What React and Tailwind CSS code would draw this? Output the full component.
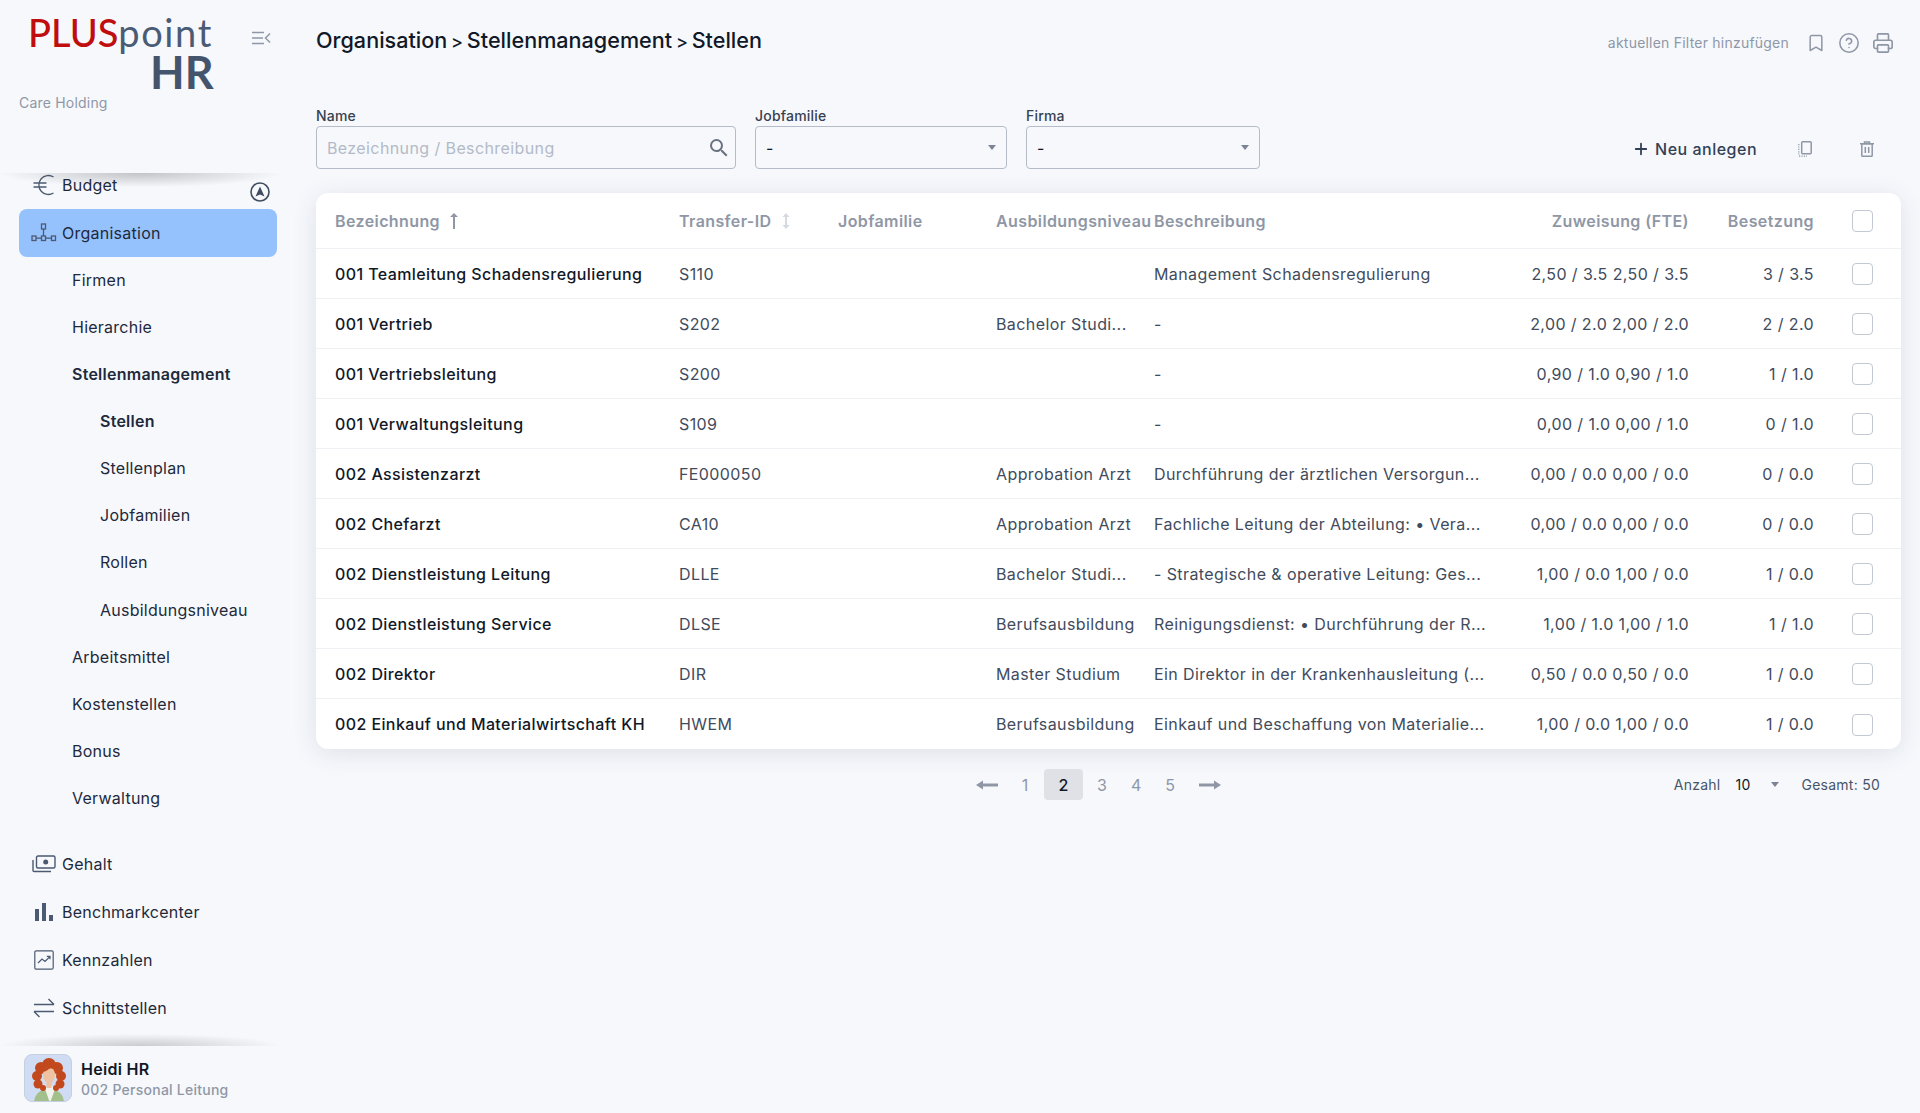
import { Bookmark, CircleHelp, Plus, Printer } from 'lucide-react';

const subNav = [
	{ label: 'Firmen', cls: 'pl-[72px]' },
	{ label: 'Hierarchie', cls: 'pl-[72px]' },
	{ label: 'Stellenmanagement', cls: 'pl-[72px] font-semibold' },
	{ label: 'Stellen', cls: 'pl-[100px] font-semibold' },
	{ label: 'Stellenplan', cls: 'pl-[100px]' },
	{ label: 'Jobfamilien', cls: 'pl-[100px]' },
	{ label: 'Rollen', cls: 'pl-[100px]' },
	{ label: 'Ausbildungsniveau', cls: 'pl-[100px]' },
	{ label: 'Arbeitsmittel', cls: 'pl-[72px]' },
	{ label: 'Kostenstellen', cls: 'pl-[72px]' },
	{ label: 'Bonus', cls: 'pl-[72px]' },
	{ label: 'Verwaltung', cls: 'pl-[72px]' },
];

const rows = [
	['001 Teamleitung Schadensregulierung', 'S110', '', 'Management Schadensregulierung', '2,50 / 3.5 2,50 / 3.5', '3 / 3.5'],
	['001 Vertrieb', 'S202', 'Bachelor Studi...', '-', '2,00 / 2.0 2,00 / 2.0', '2 / 2.0'],
	['001 Vertriebsleitung', 'S200', '', '-', '0,90 / 1.0 0,90 / 1.0', '1 / 1.0'],
	['001 Verwaltungsleitung', 'S109', '', '-', '0,00 / 1.0 0,00 / 1.0', '0 / 1.0'],
	['002 Assistenzarzt', 'FE000050', 'Approbation Arzt', 'Durchführung der ärztlichen Versorgun...', '0,00 / 0.0 0,00 / 0.0', '0 / 0.0'],
	['002 Chefarzt', 'CA10', 'Approbation Arzt', 'Fachliche Leitung der Abteilung: • Vera...', '0,00 / 0.0 0,00 / 0.0', '0 / 0.0'],
	['002 Dienstleistung Leitung', 'DLLE', 'Bachelor Studi...', '- Strategische & operative Leitung: Ges...', '1,00 / 0.0 1,00 / 0.0', '1 / 0.0'],
	['002 Dienstleistung Service', 'DLSE', 'Berufsausbildung', 'Reinigungsdienst: • Durchführung der R...', '1,00 / 1.0 1,00 / 1.0', '1 / 1.0'],
	['002 Direktor', 'DIR', 'Master Studium', 'Ein Direktor in der Krankenhausleitung (...', '0,50 / 0.0 0,50 / 0.0', '1 / 0.0'],
	['002 Einkauf und Materialwirtschaft KH', 'HWEM', 'Berufsausbildung', 'Einkauf und Beschaffung von Materialie...', '1,00 / 0.0 1,00 / 0.0', '1 / 0.0'],
];

const gridCols = 'grid grid-cols-[344px_159px_158px_158px_330px_205px_125px_1fr] pl-[19px] items-center';

const EuroIcon = () => (
	<svg width="22" height="22" viewBox="0 0 22 22" fill="none" stroke="#4b5a70" strokeWidth="1.3">
		<path d="M20.5 3a9.500 9.500 0 1 0 0 16M0.500 9h13M0.500 13h13" />
	</svg>
);

const NetworkIcon = () => (
	<svg width="26" height="20" viewBox="0 0 26 20" fill="none" stroke="#4b5a70" strokeWidth="1.3">
		<rect x="10.5" y="1" width="4" height="5" />
		<rect x="1" y="13" width="4" height="4.5" />
		<rect x="10.5" y="13" width="4" height="4.5" />
		<rect x="20.5" y="13" width="4" height="4.5" />
		<path d="M12.5 6v7M5 15.2h5.5M14.5 15.2h6" />
	</svg>
);

const MoneyIcon = () => (
	<svg width="24" height="18" viewBox="0 0 24 18" fill="none" stroke="#4b5a70" strokeWidth="1.4">
		<rect x="4.5" y="1" width="18.5" height="12" rx="1.5" />
		<circle cx="13.7" cy="7" r="1.8" fill="#4b5a70" />
		<path d="M1 5v10.5a1 1 0 0 0 1 1h17" />
	</svg>
);

const BarsIcon = () => (
	<svg width="20" height="20" viewBox="0 0 20 20" fill="#4b5a70">
		<rect x="1" y="7" width="4" height="12" />
		<rect x="8" y="1" width="4" height="18" />
		<rect x="15" y="13" width="4" height="6" />
	</svg>
);

const TrendIcon = () => (
	<svg width="20" height="20" viewBox="0 0 20 20" fill="none" stroke="#4b5a70" strokeWidth="1.2">
		<rect x="0.8" y="0.8" width="18.4" height="18.4" rx="1.5" />
		<path d="M4 13l4-4 3 2.5L16 6.5M12.8 6.3H16v3" />
	</svg>
);

const SwapIcon = () => (
	<svg width="22" height="20" viewBox="0 0 22 20" fill="none" stroke="#4b5a70" strokeWidth="1.4">
		<path d="M1 6.5h20M15.5 1l5.5 5.5M21 13.5H1M6.5 19L1 13.5" />
	</svg>
);

const CollapseIcon = () => (
	<svg width="20" height="14" viewBox="0 0 20 14" fill="none" stroke="#8f97a6" strokeWidth="1.5">
		<path d="M1 1.5h12M1 7h11M1 12.5h12M19 2.5L14.5 7l4.5 4.5" />
	</svg>
);

const CompassIcon = () => (
	<svg width="20" height="20" viewBox="0 0 20 20" fill="none">
		<circle cx="10" cy="10" r="9" stroke="#3f4c60" strokeWidth="1.6" />
		<path d="M10 4.5l4.5 10L10 12.5l-4.5 2z" fill="#3f4c60" />
	</svg>
);

const SearchIcon = () => (
	<svg width="24" height="24" viewBox="0 0 24 24" fill="#6b7280">
		<path d="M15.5 14h-.79l-.28-.27A6.47 6.47 0 0 0 16 9.5 6.5 6.5 0 1 0 9.5 16c1.61 0 3.09-.59 4.23-1.57l.27.28v.79l5 4.99L20.49 19l-4.99-5zm-6 0C7.01 14 5 11.99 5 9.500S7.010 5 9.500 5 14 7.010 14 9.500 11.990 14 9.500 14z" />
	</svg>
);

const CopyIcon = () => (
	<svg width="14" height="16" viewBox="0 0 14 16" fill="none" stroke="#8f97a6">
		<rect x="3.7" y="0.8" width="9.500" height="12" rx="1" strokeWidth="1.5" />
		<path d="M0.8 3v10.500M1 15.200h8" strokeWidth="1.2" strokeDasharray="1.2 1.2" />
	</svg>
);

const TrashIcon = () => (
	<svg width="14" height="16" viewBox="0 0 14 16" fill="none" stroke="#8f97a6" strokeWidth="1.5">
		<path d="M0 2.800h14M4.500 2.500V1h5v1.500" />
		<rect x="1.800" y="2.800" width="10.400" height="12.400" rx="0.8" />
		<path d="M5.300 6v6M8.700 6v6" />
	</svg>
);

const SortUp = () => (
	<svg width="12" height="18" viewBox="0 0 12 18" fill="#8f97a6">
		<path d="M5 17V5H2l4-4 4 4H7v12z" />
	</svg>
);

const SortBoth = () => (
	<svg width="12" height="18" viewBox="0 0 12 18" fill="#d5d9e0">
		<path d="M6 1l3.5 4H7v8h2.500L6 17l-3.500-4H5V5H2.500z" />
	</svg>
);

const PageArrow = ({ right }) => (
	<svg width="22" height="12" viewBox="0 0 22 12" fill="#8f97a6" className={right ? 'rotate-180' : ''}>
		<path d="M0 6l7-4.500V4.500h15v3H7v3z" />
	</svg>
);

const Avatar = () => (
	<div className="w-12 h-12 rounded-lg overflow-hidden border border-[#c6cfe0] bg-[#cfdcf3] shrink-0">
		<svg width="48" height="48" viewBox="0 0 48 48">
			<path d="M9 48c0-9 7-14 15-14s15 5 15 14z" fill="#a3c08c" />
			<path d="M20 34l5 14 5-14-3-3h-5z" fill="#f2f2ee" />
			<g fill="#c2491d">
				<circle cx="24" cy="10" r="7" />
				<circle cx="16" cy="13" r="6" />
				<circle cx="32" cy="13" r="6" />
				<circle cx="12" cy="21" r="5" />
				<circle cx="36" cy="21" r="5" />
				<circle cx="13" cy="29" r="4.500" />
				<circle cx="35" cy="29" r="4.500" />
				<circle cx="18" cy="33" r="3" />
				<circle cx="31" cy="33" r="3" />
			</g>
			<ellipse cx="24" cy="20" rx="6" ry="8" fill="#efc2a2" />
			<path d="M21.500 26h5v7h-5z" fill="#efc2a2" />
			<path d="M17 17c2-6 11-7 14-2-3-1-5-2-7-1-2 2-5 3-7 3z" fill="#c2491d" />
		</svg>
	</div>
);

const MainNav = ({ icon, label, active }) => (
	<div
		className={`flex items-center h-12 w-[258px] ml-[19px] pl-3 rounded-lg text-base tracking-[0.25px] text-[#1e293b] ${active ? 'bg-[#95c1fd]' : ''}`}
	>
		<span className="w-[32px] flex items-center justify-center -ml-px pr-1">{icon}</span>
		<span>{label}</span>
	</div>
);

const Checkbox = () => <span className="block w-[21px] h-[22px] bg-white rounded border border-[#c3c8d2]" />;

const SelectBox = ({ w }) => (
	<div className={`${w} h-[43px] flex items-center justify-between pl-[10px] pr-[10px] rounded border border-[#b4bcca] text-[#111827]`}>
		<span>-</span>
		<span className="w-0 h-0 border-x-4 border-x-transparent border-t-[5px] border-t-[#7b8494]" />
	</div>
);

const App = () => {
	return (
		<div className="flex w-full min-h-[1113px] bg-[#f6f8fc] font-['Inter',sans-serif] text-[#1e293b]">
			<aside className="relative w-[316px] h-[1113px] shrink-0 flex flex-col overflow-hidden">
				<div className="h-[173px] relative shrink-0">
					<div className="pt-[13px] pl-[28px] font-['Lato',sans-serif]">
						<div className="text-[38px] leading-[38px] whitespace-nowrap">
							<span className="text-[#c00d0d] font-medium">PLUS</span>
							<span className="text-[#4a5b75] tracking-[1.6px]">point</span>
						</div>
						<div className="text-[45px] leading-[36px] mt-[3px] font-bold text-[#44546c] pl-[122px]">HR</div>
					</div>
					<p className="mt-[3px] pl-[19px] text-sm tracking-[0.2px] text-[#8f97a6]">Care Holding</p>
					<span className="absolute left-[251px] top-[31px]"><CollapseIcon /></span>
				</div>
				<div className="absolute top-[173px] left-0 w-[280px] h-[14px] z-10 bg-[radial-gradient(ellipse_at_top,rgba(60,60,60,0.28),transparent_72%)]" />
				<div className="-mt-[12px]">
					<MainNav icon={<EuroIcon />} label="Budget" />
					<MainNav icon={<NetworkIcon />} label="Organisation" active />
					<div className="-mt-px">
						{subNav.map((item) => (
							<div key={item.label} className={`h-[47.15px] flex items-center text-base tracking-[0.25px] ${item.cls}`}>
								{item.label}
							</div>
						))}
					</div>
					<div className="mt-[18.6px]">
						<MainNav icon={<MoneyIcon />} label="Gehalt" />
						<MainNav icon={<BarsIcon />} label="Benchmarkcenter" />
						<MainNav icon={<TrendIcon />} label="Kennzahlen" />
						<MainNav icon={<SwapIcon />} label="Schnittstellen" />
					</div>
				</div>
				<span className="absolute left-[250px] top-[182px]"><CompassIcon /></span>
				<div className="absolute bottom-0 left-0 right-0 h-[67px] bg-[#f6f8fc] flex items-start pt-[8px] pl-[24px] gap-[9px]">
					<Avatar />
					<div className="pt-[5px]">
						<p className="text-base font-semibold tracking-[0.3px] text-[#111827] leading-5">Heidi HR</p>
						<p className="text-sm font-medium tracking-[0.25px] text-[#8f97a6] leading-5 pt-[1px]">002 Personal Leitung</p>
					</div>
				</div>
				<div className="absolute bottom-[67px] left-0 w-[280px] h-[12px] bg-[radial-gradient(ellipse_at_bottom,rgba(60,60,60,0.24),transparent_72%)]" />
			</aside>

			<main className="flex-1 pr-[19px]">
				<div className="flex items-center justify-between h-[81px]">
					<h1 className="text-[21.6px] font-medium text-[#111827]">
						Organisation <span className="inline-block -mx-[2px] text-[18px]">&gt;</span> Stellenmanagement <span className="inline-block -mx-[2px] text-[18px]">&gt;</span> Stellen
					</h1>
					<div className="flex items-center text-sm tracking-[0.22px] text-[#8f97a6] pt-[5px]">
						<span>aktuellen Filter hinzufügen</span>
						<Bookmark size={20} strokeWidth={1.8} className="ml-[17px]" />
						<CircleHelp size={22} strokeWidth={1.7} className="ml-[12px]" />
						<Printer size={22} strokeWidth={1.8} className="ml-[12px] mr-[7px]" />
					</div>
				</div>

				<div className="flex items-end h-[112px] pb-[24px]">
					<div className="w-[420px] mr-[19px]">
						<label className="block text-sm leading-4 font-medium tracking-[0.2px] text-[#374151] mb-[2px]">Name</label>
						<div className="h-[43px] flex items-center justify-between pl-[10px] pr-[4px] rounded border border-[#b4bcca]">
							<span className="text-[#b3bac7] tracking-[0.4px]">Bezeichnung / Beschreibung</span>
							<SearchIcon />
						</div>
					</div>
					<div className="mr-[19px]">
						<label className="block text-sm leading-4 font-medium tracking-[0.2px] text-[#374151] mb-[2px]">Jobfamilie</label>
						<SelectBox w="w-[252px]" />
					</div>
					<div>
						<label className="block text-sm leading-4 font-medium tracking-[0.2px] text-[#374151] mb-[2px]">Firma</label>
						<SelectBox w="w-[234px]" />
					</div>
					<div className="ml-auto h-[43px] flex items-center text-[#334155] pr-[27px] pt-[3px]">
						<Plus size={18} strokeWidth={2.4} />
						<span className="ml-[5px] font-medium tracking-[0.5px]">Neu anlegen</span>
						<span className="ml-[41px]"><CopyIcon /></span>
						<span className="ml-[48px]"><TrashIcon /></span>
					</div>
				</div>

				<div className="bg-white rounded-xl shadow-[0_4px_24px_rgba(50,60,80,0.12)] tracking-[0.4px]">
					<div className={`${gridCols} h-[56px] border-b border-[#eef0f4] font-semibold text-[#8f97a6]`}>
						<span className="flex items-center gap-2">Bezeichnung <SortUp /></span>
						<span className="flex items-center gap-2">Transfer-ID <SortBoth /></span>
						<span>Jobfamilie</span>
						<span className="whitespace-nowrap">Ausbildungsniveau</span>
						<span>Beschreibung</span>
						<span className="text-right">Zuweisung (FTE)</span>
						<span className="text-right">Besetzung</span>
						<span className="pl-[38px]"><Checkbox /></span>
					</div>
					{rows.map((row, i) => (
						<div key={row[0]} className={`${gridCols} h-[50px] text-[#414b5c] ${i < rows.length - 1 ? 'border-b border-[#eef0f4]' : ''}`}>
							<span className="font-medium text-[#111827] whitespace-nowrap">{row[0]}</span>
							<span>{row[1]}</span>
							<span />
							<span className="whitespace-nowrap">{row[2]}</span>
							<span className="whitespace-nowrap">{row[3]}</span>
							<span className="text-right">{row[4]}</span>
							<span className="text-right">{row[5]}</span>
							<span className="pl-[38px] pt-[1px]"><Checkbox /></span>
						</div>
					))}
				</div>

				<div className="flex items-center h-[31px] mt-[20px]">
					<div className="flex items-center ml-[660px] text-[#8f97a6]">
						<PageArrow />
						<span className="ml-[22px] w-[10px] text-center">1</span>
						<span className="ml-[14px] w-[39px] h-[31px] rounded bg-[#dfe1e6] text-[#111827] font-medium flex items-center justify-center">2</span>
						<span className="ml-[14px] w-[10px] text-center">3</span>
						<span className="ml-[24px] w-[10px] text-center">4</span>
						<span className="ml-[24px] w-[10px] text-center">5</span>
						<span className="ml-[24px]"><PageArrow right /></span>
					</div>
					<div className="ml-auto flex items-center text-sm tracking-[0.25px] text-[#475569] pr-[21px]">
						<span>Anzahl</span>
						<span className="ml-[15px] text-[#111827]">10</span>
						<span className="ml-[21px] w-0 h-0 border-x-[4px] border-x-transparent border-t-[5px] border-t-[#7b8494]" />
						<span className="ml-[22px]">Gesamt: 50</span>
					</div>
				</div>
			</main>
		</div>
	);
};

export default App;
